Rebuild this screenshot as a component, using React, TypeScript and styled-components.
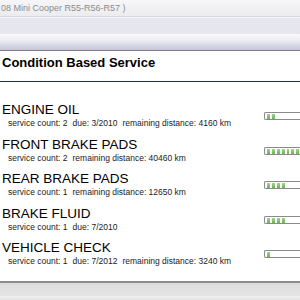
import React, { FC } from "react";
import styled, { createGlobalStyle } from "styled-components";

const GlobalStyle = createGlobalStyle`
  html, body {
    margin: 0;
    padding: 0;
    background: #ffffff;
  }
`

const Window = styled.div`
  width: 300px;
  height: 300px;
  overflow: hidden;
  display: flex;
  flex-direction: column;
  font-family: "Liberation Sans", Arial, sans-serif;
  background: #ffffff;
`

const TitleBar = styled.div`
  height: 17px;
  flex: none;
  box-sizing: border-box;
  padding-left: 1px;
  display: flex;
  align-items: center;
  background: linear-gradient(#f6f6f8, #ececf0);
  border-bottom: 1px solid #d4d4dc;
  color: #8c8c8c;
  font-size: 9px;
  white-space: nowrap;
`

const ToolBand = styled.div`
  height: 16px;
  flex: none;
  background: #e6e6ee;
  border-top: 1px solid #f8f8fa;
`

const HeaderBand = styled.div`
  height: 16px;
  flex: none;
  background: linear-gradient(#fafafc 0%, #ececf2 40%, #c6c6d6 100%);
  border-bottom: 1px solid #7c7c8c;
`

const Content = styled.div`
  flex: 1;
  display: flex;
  flex-direction: column;
  min-height: 0;
`

const Heading = styled.h1`
  margin: 0;
  padding: 4px 0 0 2px;
  height: 31px;
  box-sizing: border-box;
  font-size: 13px;
  line-height: 15px;
  font-weight: bold;
  color: #000000;
  border-bottom: 1px solid #1c1cc4;
`

const List = styled.div`
  display: flex;
  flex-direction: column;
  gap: 6.5px;
  padding-top: 20px;
`

const Row = styled.div`
  display: flex;
  align-items: center;
  justify-content: space-between;
`

const Info = styled.div`
  display: flex;
  flex-direction: column;
  padding-left: 2px;
`

const Name = styled.div`
  font-size: 13.5px;
  line-height: 15px;
  color: #000000;
`

const Details = styled.div`
  display: flex;
  gap: 5px;
  padding-left: 6px;
  font-size: 8.5px;
  line-height: 13px;
  color: #222222;
  white-space: nowrap;
`

const Gauge = styled.div`
  width: 40px;
  height: 8px;
  box-sizing: border-box;
  margin-right: -4px;
  flex: none;
  display: flex;
  gap: 2px;
  padding: 1px 0 0 2px;
  border: 1px solid #8a8a8a;
  border-right: none;
  border-radius: 2px 0 0 2px;
  background: #ffffff;
`

const Segment = styled.span`
  width: 3px;
  height: 5px;
  background: linear-gradient(#9fd68c, #6cb454);
`

const Footer = styled.div`
  height: 17px;
  flex: none;
  border-top: 2px solid #8c8c8c;
  background: linear-gradient(#dcdcdc 0%, #e4e4e4 75%, #f2f2f2 78%, #e2e2e2 100%);
`

type Service = {
  name: string
  details: string[]
  level: number
}

const services: Service[] = [
  { name: "ENGINE OIL", details: ["service count: 2", "due: 3/2010", "remaining distance: 4160 km"], level: 2 },
  { name: "FRONT BRAKE PADS", details: ["service count: 2", "remaining distance: 40460 km"], level: 8 },
  { name: "REAR BRAKE PADS", details: ["service count: 1", "remaining distance: 12650 km"], level: 4 },
  { name: "BRAKE FLUID", details: ["service count: 1", "due: 7/2010"], level: 4 },
  { name: "VEHICLE CHECK", details: ["service count: 1", "due: 7/2012", "remaining distance: 3240 km"], level: 1 },
]

const App: FC = () => {
  return (
    <>
      <GlobalStyle />
      <Window>
        <TitleBar>08 Mini Cooper R55-R56-R57 )</TitleBar>
        <ToolBand />
        <HeaderBand />
        <Content>
          <Heading>Condition Based Service</Heading>
          <List>
            {services.map(s => (
              <Row key={s.name}>
                <Info>
                  <Name>{s.name}</Name>
                  <Details>
                    {s.details.map(d => <span key={d}>{d}</span>)}
                  </Details>
                </Info>
                <Gauge>
                  {Array.from({ length: s.level }).map((_, i) => <Segment key={i} />)}
                </Gauge>
              </Row>
            ))}
          </List>
        </Content>
        <Footer />
      </Window>
    </>
  )
}

export default App
